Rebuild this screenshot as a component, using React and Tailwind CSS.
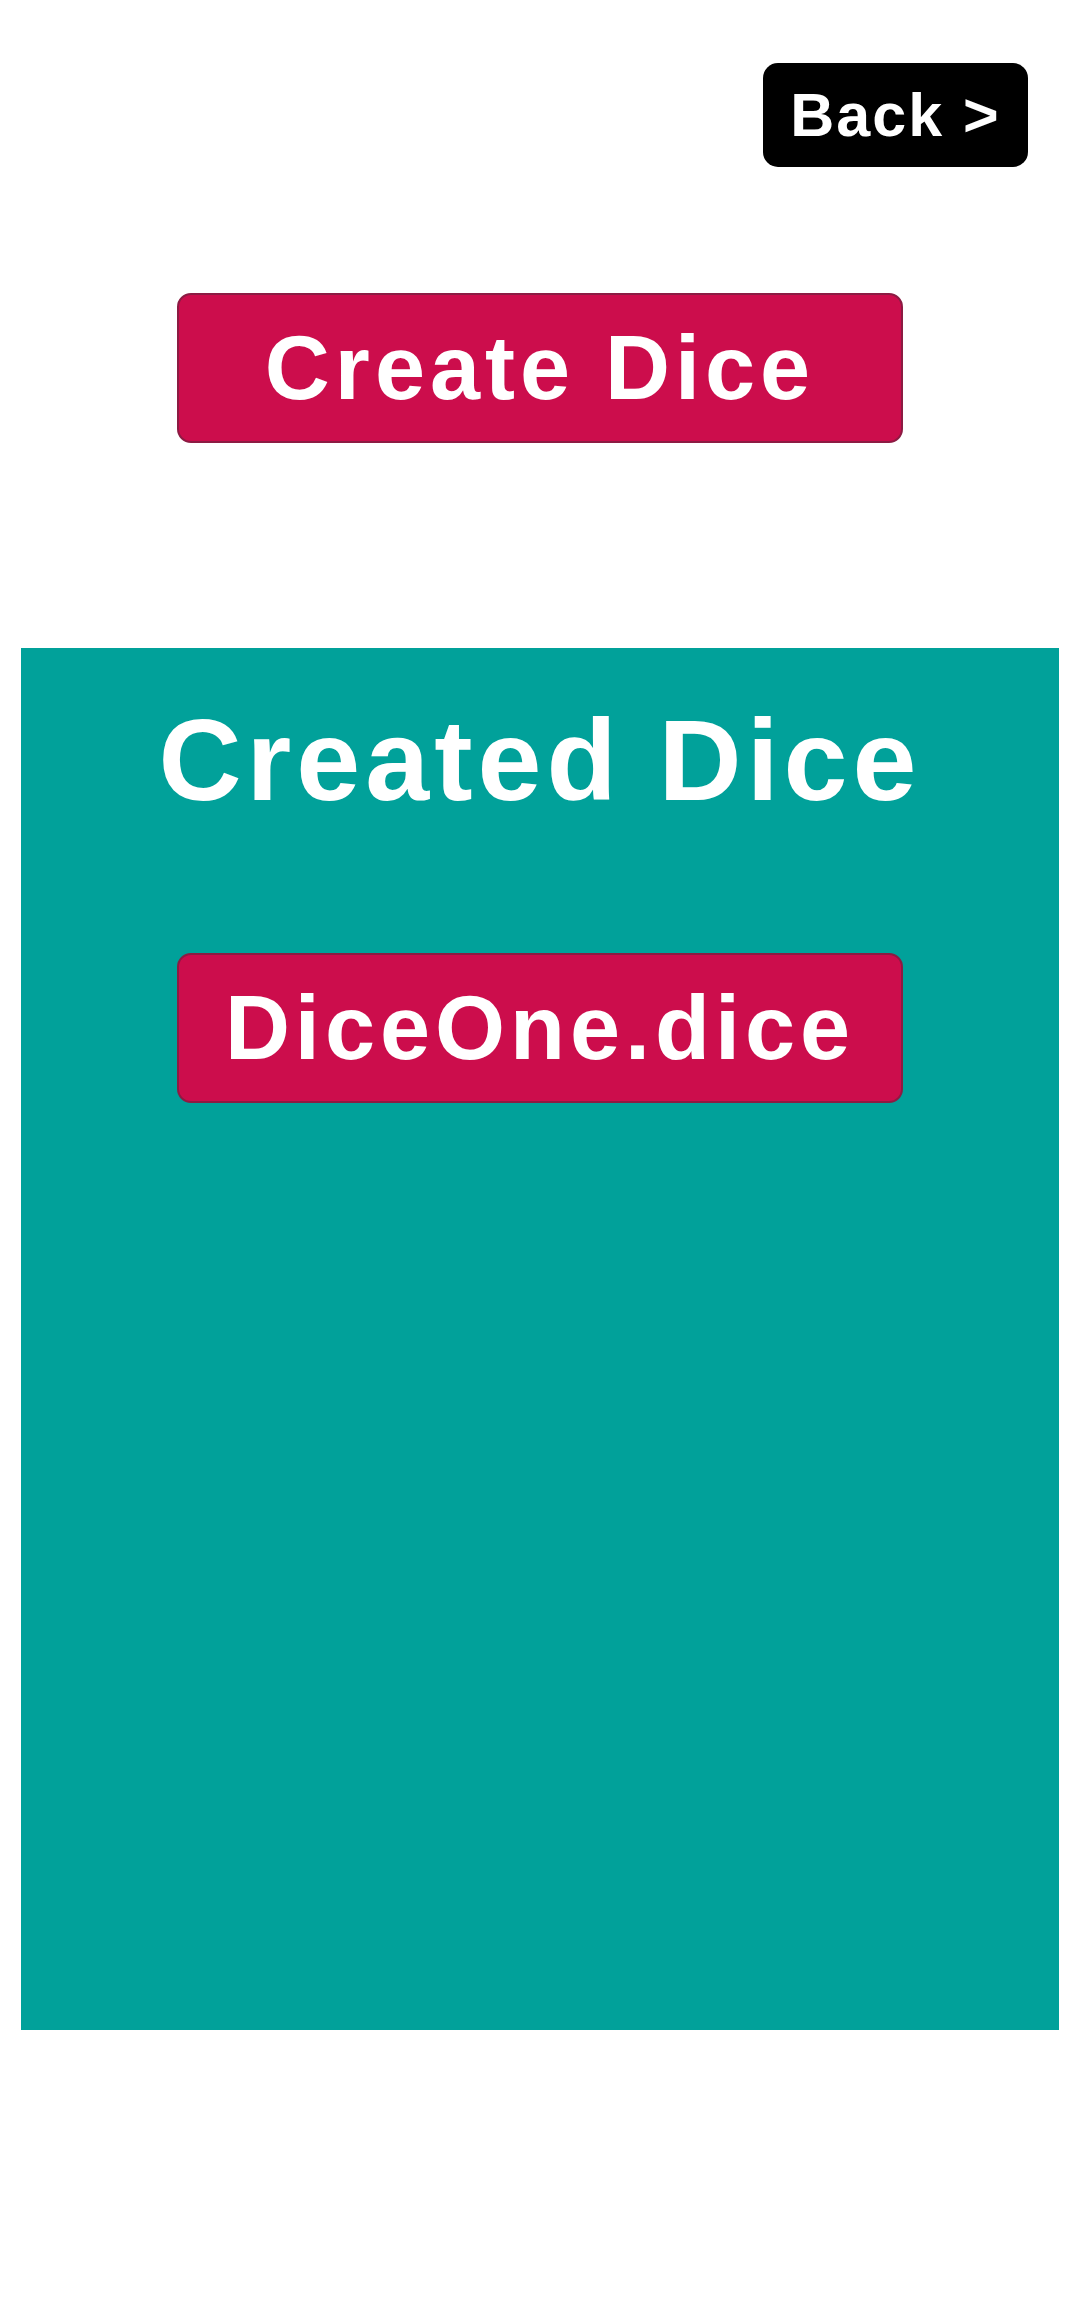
export default function App() {
  return (
    <div className="w-[1080px] h-[2310px] bg-white flex flex-col font-['Liberation_Sans',Arial,sans-serif]">
      {/* Top bar */}
      <div className="flex justify-end pt-[63px] pr-[52px]">
        <button className="w-[265px] h-[104px] bg-black rounded-[15px] text-white text-[61px] font-bold leading-none tracking-[2px]">
          Back &gt;
        </button>
      </div>

      {/* Create */}
      <div className="flex justify-center mt-[126px]">
        <button className="w-[726px] h-[150px] bg-[#cc0d4c] border-2 border-[#8c1b43] rounded-[14px] text-white text-[90px] font-bold leading-none tracking-[5px]">
          Create Dice
        </button>
      </div>

      {/* Created list */}
      <div className="mt-[205px] mx-[21px] h-[1382px] bg-[#01a19a] flex flex-col items-center">
        <h1 className="mt-[55px] text-white text-[115px] font-bold leading-none tracking-[5px]">
          Created Dice
        </h1>
        <button className="mt-[135px] w-[726px] h-[150px] bg-[#cc0d4c] border-2 border-[#8c1b43] rounded-[14px] text-white text-[90px] font-bold leading-none tracking-[5px]">
          DiceOne.dice
        </button>
      </div>
    </div>
  );
}
